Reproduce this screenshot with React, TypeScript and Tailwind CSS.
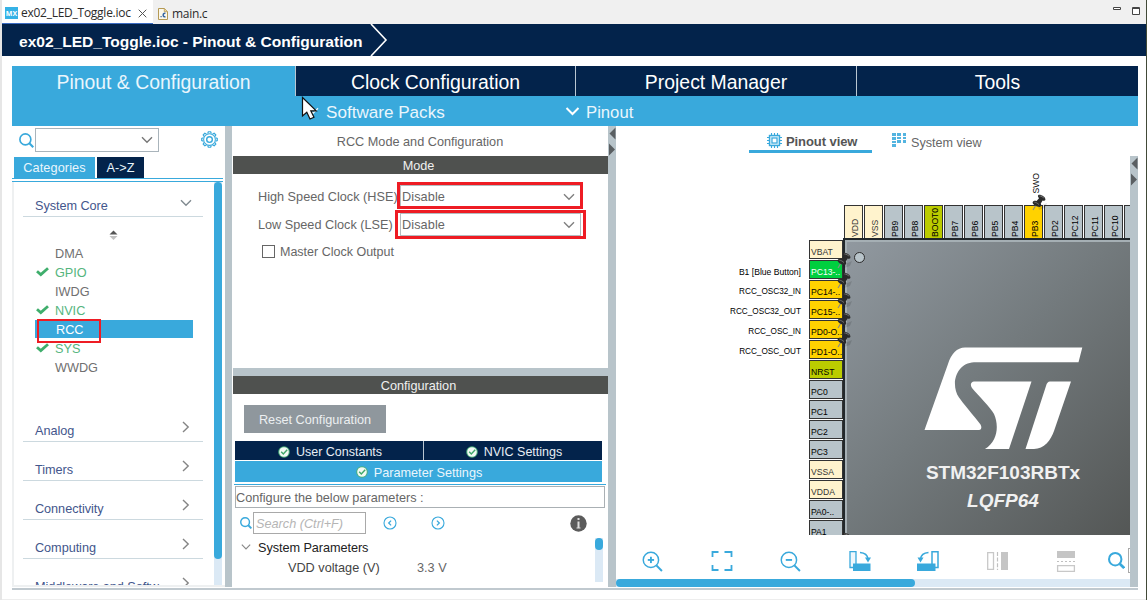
import React from "react";

const SANS = "font-['Liberation_Sans',Arial,sans-serif]";

function Chevron({ dir, className = "" }: { dir: "down" | "right"; className?: string }) {
  return dir === "down" ? (
    <svg width="12" height="8" viewBox="0 0 12 8" className={className} fill="none" stroke="currentColor" strokeWidth="1.4">
      <path d="M1 1.2 L6 6.2 L11 1.2" />
    </svg>
  ) : (
    <svg width="8" height="12" viewBox="0 0 8 12" className={className} fill="none" stroke="currentColor" strokeWidth="1.4">
      <path d="M1 1 L6.2 6 L1 11" />
    </svg>
  );
}

function Magnifier({ size = 16, sign, stroke = 2 }: { size?: number; sign?: "plus" | "minus"; stroke?: number }) {
  return (
    <svg width={size} height={size} viewBox="0 0 20 20" fill="none" stroke="#39a9dc" strokeWidth={stroke} className="shrink-0">
      <circle cx="8.5" cy="8.5" r="7.3" />
      <path d="M13.8 13.8 L19 19" strokeWidth={stroke * 1.3} />
      {sign && <path d="M5.5 8.5 H11.5" strokeWidth="1.8" />}
      {sign === "plus" && <path d="M8.5 5.5 V11.5" strokeWidth="1.8" />}
    </svg>
  );
}

function Gear() {
  const teeth = Array.from({ length: 8 }, (_, i) => i * 45);
  return (
    <svg width="17" height="17" viewBox="-9 -9 18 18" fill="none" stroke="#39a9dc">
      {teeth.map((a) => (
        <path key={a} d="M-1.9 -6.4 L-1.2 -8.2 H1.2 L1.9 -6.4" strokeWidth="1.3" transform={`rotate(${a})`} />
      ))}
      <circle r="6.2" strokeWidth="1.1" />
      <circle r="3" strokeWidth="1.5" />
    </svg>
  );
}

function Tick() {
  return (
    <svg width="13" height="10" viewBox="0 0 13 10" fill="none" stroke="#3fae6c" strokeWidth="2.8">
      <path d="M1 4.2 L4.8 7.6 L12 1.2" />
    </svg>
  );
}

function Badge() {
  return (
    <svg width="12" height="12" viewBox="0 0 12 12" className="shrink-0">
      <circle cx="6" cy="6" r="5.8" fill="#4bb17a" />
      <circle cx="6" cy="6" r="4.8" fill="#f2faf4" />
      <path d="M3.2 5.8 L5.3 8 L9.2 3.8" fill="none" stroke="#3fa869" strokeWidth="1.4" />
    </svg>
  );
}

function EditorTabs() {
  return (
    <div className="flex h-6 bg-[#f0f0f0] font-['Open_Sans','Noto_Sans',sans-serif] text-[12px] text-[#2b2b2b]">
      <div className="flex w-[151px] items-center border-b border-[#3b6cc4] bg-white pl-[3px] pt-[3px]">
        <div className="flex h-3 w-[13px] items-center justify-center bg-[#35b2e6] text-[7px] font-bold leading-none text-white">MX</div>
        <span className="ml-[3px] w-[111px] whitespace-nowrap tracking-[-0.26px]">ex02_LED_Toggle.ioc</span>
        <svg width="9" height="9" viewBox="0 0 9 9" stroke="#555" strokeWidth="1" className="ml-[6px]">
          <path d="M0.7 0.7 L8.3 8.3 M8.3 0.7 L0.7 8.3" />
        </svg>
      </div>
      <div className="flex items-center pl-[5px] pt-[3px]">
        <svg width="10" height="12" viewBox="0 0 10 12">
          <path d="M0.5 0.5 H6.5 L9.5 3.5 V11.5 H0.5 Z" fill="#fbf8ec" stroke="#b59a55" />
          <path d="M6.3 0.5 V3.7 H9.5" fill="#ecd9a0" stroke="#b59a55" strokeWidth=".8" />
          <path d="M7.5 5.4 C4.6 4.4 4.2 9.6 7.5 8.7" fill="none" stroke="#3465a4" strokeWidth="1.5" />
          <path d="M2.5 8 h1.2 v1.3 h-1.2z" fill="#3465a4" />
        </svg>
        <span className="ml-1 tracking-[-0.3px]">main.c</span>
      </div>
      <svg width="30" height="12" viewBox="0 0 30 12" className="ml-auto mr-[4px] mt-[5px]" fill="#fff" stroke="#444">
        <path d="M1.5 2.5 H8.5 V4.5 H1.5 Z" />
        <path d="M20.5 2.5 H27.5 V9.5 H20.5 Z M20.5 3.5 H27.5" />
      </svg>
    </div>
  );
}

function TitleBar() {
  return (
    <div className="flex h-8 items-center bg-[#03234b] pl-[17px]">
      <span className="w-[351px] whitespace-nowrap pt-[3px] text-[15.56px] font-bold text-white">
        ex02_LED_Toggle.ioc - Pinout &amp; Configuration
      </span>
      <svg width="18" height="32" viewBox="0 0 18 32" fill="none" stroke="#fff" strokeWidth="1.6">
        <path d="M1 0 L16 16 L1 32" />
      </svg>
    </div>
  );
}

function MainTabs() {
  const tab = "flex items-center justify-center pt-[4px]";
  return (
    <div className="text-[19.4px] leading-none text-white">
      <div className="grid h-[30px] grid-cols-[283px_279px_280px_281px] grid-rows-[30px] gap-x-px bg-[#b9c6d2]">
        <div className={`${tab} bg-[#39a9dc] text-[#eaf6fc]`}>Pinout &amp; Configuration</div>
        <div className={`${tab} bg-[#03234b]`}>Clock Configuration</div>
        <div className={`${tab} bg-[#03234b]`}>Project Manager</div>
        <div className={`${tab} bg-[#03234b]`}>Tools</div>
      </div>
      <div className="flex h-[30px] items-center bg-[#39a9dc] pl-[295px] pt-[4px] text-[16.7px] text-[#eaf6fc]">
        <Chevron dir="down" className="mb-1" />
        <span className="ml-[7px] w-[239px] text-[17.1px]">Software Packs</span>
        <svg width="15" height="9" viewBox="0 0 15 9" fill="none" stroke="#fff" strokeWidth="2" className="mb-1">
          <path d="M1.5 1 L7.5 7 L13.5 1" />
        </svg>
        <span className="ml-[6px]">Pinout</span>
      </div>
    </div>
  );
}

const peripherals = [
  { name: "DMA" },
  { name: "GPIO", on: true },
  { name: "IWDG" },
  { name: "NVIC", on: true },
  { name: "RCC", selected: true },
  { name: "SYS", on: true },
  { name: "WWDG" },
];

function Section({ name, open }: { name: string; open?: boolean }) {
  return (
    <div className="ml-[9px] flex h-[39px] w-[180px] shrink-0 items-end border-b border-[#ccd9df] pb-[2px] pl-3 text-[12.7px] leading-[15px] text-[#43568c]">
      <span className="w-[147px] whitespace-nowrap tracking-[-0.05px]">{name}</span>
      <Chevron dir={open ? "down" : "right"} className={open ? "mb-[7px] -ml-[2px] text-[#808a90]" : "mb-[6px] text-[#858585]"} />
    </div>
  );
}

function CategoryPanel() {
  return (
    <div className="flex w-[213px] flex-col text-[12.7px]">
      <div className="flex h-[31px] items-start pl-[7px] pt-[2px]">
        <div className="mt-[5px]"><Magnifier size={15} stroke={2.2} /></div>
        <div className="ml-px flex h-[24px] w-[124px] items-center justify-end border border-[#a9b4bb] pr-[5px] text-[#777]">
          <Chevron dir="down" />
        </div>
        <div className="ml-[42px] mt-[3px]"><Gear /></div>
      </div>
      <div className="flex h-[21px] gap-[2px] pl-[2px] text-[#eaf6fc]">
        <div className="flex w-[81px] items-center justify-center bg-[#39a9dc] pt-[3px] tracking-[0.1px]">Categories</div>
        <div className="flex w-[47px] items-center justify-center bg-[#03234b] pt-[3px]">A-&gt;Z</div>
      </div>
      <div className="h-[4px] w-[211px] border-y border-[#39a9dc]" />
      <div className="flex min-h-0 flex-1 border-b-2 border-l-2 border-[#eef0f1]">
        <div className="flex h-[403px] w-[200px] flex-col overflow-hidden">
          <div className="-mt-[4px]"><Section name="System Core" open /></div>
          <svg width="9" height="10" viewBox="0 0 9 10" className="ml-[95px] mt-[13px] shrink-0">
            <path d="M0.5 4.5 L4.5 0.5 L8.5 4.5 Z" fill="#555" />
            <path d="M0.5 6 L4.5 10 L8.5 6 Z" fill="#c0c0c0" />
          </svg>
          <div className="mt-[3px] flex shrink-0 flex-col">
            {peripherals.map((p) => (
              <div key={p.name} className="relative flex h-[19px] items-center pl-[21px]">
                <div className={`flex h-[18px] w-[158px] items-center ${p.selected ? "bg-[#39a9dc] text-white" : p.on ? "text-[#55b57e]" : "text-[#707070]"}`}>
                  <span className="w-5 shrink-0 pl-[1px]">{p.on && <Tick />}</span>
                  <span className={p.selected ? "ml-px pt-[5px]" : "pt-[4px]"}>{p.name}</span>
                </div>
                {p.selected && <div className="absolute left-[23px] top-0 h-[24px] w-[64px] border-2 border-[#ee1c24]" />}
              </div>
            ))}
          </div>
          <div className="mt-[27px] flex flex-col">
            {["Analog", "Timers", "Connectivity", "Computing", "Middleware and Softw"].map((n) => (
              <Section key={n} name={n} />
            ))}
          </div>
        </div>
        <div className="w-2 bg-[#dbe9f5]">
          <div className="h-[377px] rounded-full bg-[#39a9dc]" />
        </div>
      </div>
    </div>
  );
}

function ModeRow({ label, className, frame }: { label: string; className: string; frame: string }) {
  return (
    <div className={`relative flex items-center pl-[25px] ${className}`}>
      <span className="w-[142px] whitespace-nowrap pt-[2px]">{label}</span>
      <div className="flex h-[23px] w-[181px] items-center justify-between border border-[#b4bcc0] bg-white pl-[1px] pr-[5px]">
        <span className="pt-[2px] tracking-[0.1px]">Disable</span>
        <Chevron dir="down" className="text-[#808080]" />
      </div>
      <div className={`absolute border-3 border-[#ee1c24] ${frame}`} />
    </div>
  );
}

function CircleArrow({ flip }: { flip?: boolean }) {
  return (
    <svg width="14" height="14" viewBox="0 0 14 14" fill="none" stroke="#39a9dc" className={flip ? "scale-x-[-1]" : ""}>
      <circle cx="7" cy="7" r="6" strokeWidth="1.1" />
      <path d="M8.1 4.6 L5.7 7 L8.1 9.4" strokeWidth="1.3" />
    </svg>
  );
}

function ModePanel() {
  return (
    <div className="flex w-[375px] flex-col text-[12.7px] text-[#666]">
      <div className="flex h-[30px] items-center justify-center pr-px pt-[3px]">RCC Mode and Configuration</div>
      <div className="flex h-[18px] items-center justify-center bg-[#4f514f] pr-[4px] pt-[3px] text-[#f0f0f0]">Mode</div>
      <div className="flex h-[194px] flex-col pt-[10px]">
        <ModeRow label="High Speed Clock (HSE)" className="h-[25px]" frame="left-[164px] top-[-2px] h-[27px] w-[186px]" />
        <ModeRow label="Low Speed Clock (LSE)" className="mt-[3px] h-[25px]" frame="left-[162px] top-[-2px] h-[29px] w-[191px]" />
        <div className="mt-[5px] flex items-center pl-[29px]">
          <div className="h-[13px] w-[13px] border border-[#666]" />
          <span className="ml-[5px] pt-px text-[12.5px]">Master Clock Output</span>
        </div>
      </div>
      <div className="h-[8px] bg-[#b8c4ca]" />
      <div className="flex h-[18px] items-center justify-center bg-[#4f514f] pr-[4px] pt-[3px] text-[#f0f0f0]">Configuration</div>
      <div className="ml-[11px] mt-[11px] flex h-[28px] w-[142px] items-center justify-center bg-[#8f979d] pt-[3px] text-[#eceff1]">
        Reset Configuration
      </div>
      <div className="ml-[2px] mt-[8px] grid h-[19px] w-[367px] grid-cols-[188px_178px] grid-rows-[19px] gap-x-px bg-[#b9c6d2] text-[#e8eef5]">
        <div className="flex items-center justify-center gap-[6px] bg-[#03234b] pl-[2px] pt-[2px] text-[12.5px] leading-none"><Badge /><span className="pt-[2px]">User Constants</span></div>
        <div className="flex items-center justify-center gap-[6px] bg-[#03234b] pl-[2px] pt-[2px] text-[12.5px] leading-none"><Badge /><span className="pt-[2px]">NVIC Settings</span></div>
      </div>
      <div className="ml-[2px] mt-px flex h-[21px] w-[367px] items-center justify-center gap-[6px] bg-[#39a9dc] pl-px pt-px leading-none text-[#eaf6fc]"><Badge /><span className="pt-[3px]">Parameter Settings</span></div>
      <div className="ml-px h-[3px] w-[372px] border-b border-[#39a9dc]" />
      <div className="ml-[2px] mt-px flex h-[22px] w-[370px] items-center border border-[#aab0b4] pl-px pt-[3px] text-[12.7px]">
        <span className="-ml-px">Configure the below parameters :</span>
      </div>
      <div className="flex h-[30px] items-center pl-[7px]">
        <Magnifier size={12} stroke={2.4} />
        <div className="ml-[1px] flex h-[22px] w-[113px] items-center border border-[#a9a9a9] pl-[2px] pt-[3px] italic text-[#b5b5b5]">Search (Ctrl+F)</div>
        <div className="ml-[17px]"><CircleArrow /></div>
        <div className="ml-[34px]"><CircleArrow flip /></div>
        <svg width="17" height="17" viewBox="0 0 17 17" className="ml-[125px]">
          <circle cx="8.5" cy="8.5" r="8.2" fill="#5b5b5b" />
          <path d="M7.5 3 h2 v2 h-2 z M7.5 6.5 h2 v6 h1 v1 h-4 v-1 h1 z" fill="#ddd" />
        </svg>
      </div>
      <div className="flex h-[47px] justify-between pr-[5px]">
        <div className="flex flex-col pt-px text-[#222]">
          <div className="flex h-5 items-center pl-[8px]">
            <Chevron dir="down" className="mb-1 w-[10px] text-[#888]" />
            <span className="ml-[7px] tracking-[-0.06px]">System Parameters</span>
          </div>
          <div className="flex h-5 items-center pl-[55px] text-[#444]">
            <span className="w-[129px]">VDD voltage (V)</span>
            <span className="text-[#666]">3.3 V</span>
          </div>
        </div>
        <div className="h-[44px] w-2 bg-[#dbe9f5]"><div className="h-[12px] rounded-full bg-[#39a9dc]" /></div>
      </div>
    </div>
  );
}

const PIN_TONES = {
  power: "bg-[#fff3cd] text-[#333]",
  idle: "bg-[#b8c4ca] text-black",
  boot: "bg-[#bbcc00] text-black",
  used: "bg-[#ffd200] text-black",
  active: "bg-[#00cf3f] text-white",
};
type Tone = keyof typeof PIN_TONES;

const topPins: [string, Tone][] = [
  ["VDD", "power"], ["VSS", "power"], ["PB9", "idle"], ["PB8", "idle"], ["BOOT0", "boot"],
  ["PB7", "idle"], ["PB6", "idle"], ["PB5", "idle"], ["PB4", "idle"], ["PB3", "used"],
  ["PD2", "idle"], ["PC12", "idle"], ["PC11", "idle"], ["PC10", "idle"], ["", "idle"],
];

const leftPins: [string, Tone, string?][] = [
  ["VBAT", "power"],
  ["PC13-..", "active", "B1 [Blue Button]"],
  ["PC14-..", "used", "RCC_OSC32_IN"],
  ["PC15-..", "used", "RCC_OSC32_OUT"],
  ["PD0-O..", "used", "RCC_OSC_IN"],
  ["PD1-O..", "used", "RCC_OSC_OUT"],
  ["NRST", "boot"],
  ["PC0", "idle"], ["PC1", "idle"], ["PC2", "idle"], ["PC3", "idle"],
  ["VSSA", "power"], ["VDDA", "power"], ["PA0-..", "idle"], ["PA1", "idle"],
];

function Pushpin({ className }: { className: string }) {
  return (
    <svg width="18" height="18" viewBox="0 0 18 18" className={`absolute ${className}`}>
      <path d="M7 13 L16 9 L14 14 L8 16 Z" fill="#000" opacity=".12" />
      <path d="M5 11 L2 16" stroke="#888" strokeWidth="1.1" />
      <path d="M7.2 1.2 C8.6 -0.4 14.6 2.6 14.4 5.4 C14.2 6.8 12.6 7 11.6 6.6 L9.8 9.4 C10.8 11.4 10 13.2 8.4 13 C5.6 12.8 1.4 10.6 1.6 8.4 C1.8 7 3.6 6.4 5.6 7 L8 4.2 C7 3.2 6.6 2 7.2 1.2 Z" fill="#2a2a2a" />
      <path d="M8.4 2 C10.2 2 12 3 13.2 4.4 M3.4 8.2 C5 8.4 6.6 9.2 8 10.6" stroke="#777" strokeWidth=".9" fill="none" />
    </svg>
  );
}

function ChipCanvas() {
  return (
    <div className="relative h-[379px] w-[514px] overflow-hidden text-[8.6px] leading-none">
      <div className="absolute left-[228px] top-[49px] flex gap-px">
        {topPins.map(([name, tone], i) => (
          <div key={i} className={`flex h-[34px] w-[19px] shrink-0 items-center border border-[#333] pb-[1px] pl-[6px] ${PIN_TONES[tone]}`}>
            <span className="h-full rotate-180 whitespace-nowrap pt-0 text-left [writing-mode:vertical-rl]">{name}</span>
          </div>
        ))}
      </div>
      <div className="absolute left-0 top-[84px] flex flex-col gap-px">
        {leftPins.map(([name, tone, label]) => (
          <div key={name} className="flex h-[19px] items-center">
            <span className={`w-[185px] whitespace-nowrap pt-[5px] text-right text-black ${label?.startsWith("B1") ? "text-[8.6px]" : "text-[8.2px]"}`}>{label}</span>
            <div className={`ml-[8px] flex h-[19px] w-[34px] items-center overflow-hidden whitespace-nowrap border border-[#333] pl-px pt-[5px] ${PIN_TONES[tone]}`}>{name}</div>
          </div>
        ))}
      </div>
      <div className="absolute left-[227px] top-[82px] h-[310px] w-[480px] border-2 border-[#22282b] bg-[linear-gradient(135deg,#9199a0_0%,#737a7d_35%,#545756_74%,#4c4f4e_100%)] shadow-[inset_2px_2px_0_#a5afb4]" />
      <div className="absolute left-[238px] top-[96px] h-[11px] w-[11px] rounded-full border border-[#2b2b2b] bg-[#b8c4ca]" />
      <svg width="210" height="120" viewBox="900 330 210 120" className="absolute left-[284px] top-[174px]">
        <g fill="#fff">
          <path d="M965 347.5 H1082.3 L1078.5 362.3 H974 C956.5 363 950 384 959 397.5 C962 402 974 416 980.5 424.5 C982 427 981.5 430 979 430 H924.5 L948 364 C951 354 957 347.5 965 347.5 Z" />
          <path d="M974 381.5 H1031.5 L1009 449 H985 C998 441 999 425 994 414 C991 408 978 395 972 388 C969.5 384.5 971.5 381.5 974 381.5 Z" />
          <path d="M1050 381.5 H1071 L1054 431 C1051 440 1044 449 1034 449 H1025.5 L1046 386 C1046.8 383 1048 381.5 1050 381.5 Z" />
        </g>
      </svg>
      <div className="absolute left-[287px] top-[307px] w-[200px] text-center text-[19px] font-bold leading-[20px] text-[#f1f1f1]">STM32F103RBTx</div>
      <div className="absolute left-[287px] top-[335px] w-[200px] text-center text-[19px] font-bold italic leading-[20px] text-[#f1f1f1]">LQFP64</div>
      <Pushpin className="left-[220px] top-[96px]" />
      <Pushpin className="left-[220px] top-[116px]" />
      <Pushpin className="left-[220px] top-[136px]" />
      <Pushpin className="left-[220px] top-[156px]" />
      <Pushpin className="left-[220px] top-[175px]" />
      <Pushpin className="left-[415px] top-[38px]" />
      <Pushpin className="left-[220px] top-[376px]" />
      <span className="absolute left-[416px] top-[17px] rotate-180 text-[8.6px] text-black [writing-mode:vertical-rl]">SWO</span>
    </div>
  );
}

function ViewTabs() {
  return (
    <div className="flex h-[30px] pl-[133px] text-[#666]">
      <div className="flex h-[27px] w-[123px] items-center border-b-3 border-[#39a9dc] pl-[18px] pt-[4px] text-[13px] font-bold text-[#555]">
        <svg width="15" height="15" viewBox="0 0 15 15" fill="none" stroke="#39a9dc" className="mr-[4px]">
          <path d="M4.5 0 V15 M7.5 0 V15 M10.5 0 V15 M0 4.5 H15 M0 7.5 H15 M0 10.5 H15" strokeWidth="1.1" />
          <rect x="2.5" y="2.5" width="10" height="10" fill="#d9effa" strokeWidth="1.4" />
          <rect x="5" y="5" width="5" height="5" fill="#fff" strokeWidth="1.2" />
        </svg>
        <span className="pt-[4px] tracking-[-0.08px]">Pinout view</span>
      </div>
      <div className="flex h-[27px] items-center pl-[20px] pt-[3px] text-[12.6px]">
        <svg width="15" height="14" viewBox="0 0 15 14" className="-mt-[3px] mr-[4px]" fill="#53b4e0">
          <path d="M0 0h4v3H0z M5 0h4v3H5z M11 0h3v3h-3z M0 4h4v3H0z M5 4h4v2H5z M11 4h3v2h-3z M0 8h4v2H0z M5 7h4v3H5z M11 7h3v3h-3z M0 11h4v3H0z" />
        </svg>
        <span className="pt-[5px]">System view</span>
      </div>
    </div>
  );
}

function CanvasToolbar() {
  return (
    <div className="flex h-[44px] w-[514px] items-start overflow-hidden pl-[26px] pt-[16px]">
      <div className="w-[69px] shrink-0"><Magnifier size={21} sign="plus" stroke={1.4} /></div>
      <svg width="22" height="20" viewBox="0 0 22 20" fill="none" stroke="#39a9dc" strokeWidth="1.8" className="mr-[47px] shrink-0">
        <path d="M1.5 6 V1 H7.5 M13.5 1 H20.5 V6 M20.5 14 V19 H13.5 M7.5 19 H1.5 V14" />
      </svg>
      <div className="w-[69px] shrink-0"><Magnifier size={21} sign="minus" stroke={1.4} /></div>
      <svg width="22" height="20" viewBox="0 0 22 20" className="mr-[46px] shrink-0">
        <path d="M1 .7 H7 V16.5 H1 Z" fill="#eef7fc" stroke="#39a9dc" strokeWidth="1.3" />
        <path d="M4 12.5 H21.5 V20 H4 Z" fill="#39a9dc" />
        <path d="M11 1.6 C15.5 2 18.5 4 19 8" fill="none" stroke="#39a9dc" strokeWidth="1.5" />
        <path d="M16 6.5 H22 L19 11.5 Z" fill="#39a9dc" />
      </svg>
      <svg width="22" height="20" viewBox="0 0 22 20" className="mr-[48px] shrink-0 scale-x-[-1]">
        <path d="M1 .7 H7 V16.5 H1 Z" fill="#fff" stroke="#39a9dc" strokeWidth="1.5" />
        <path d="M3.5 12.5 H22 V20 H3.5 Z" fill="#39a9dc" />
        <path d="M10.5 1.6 C15 2 18 4 18.5 8" fill="none" stroke="#39a9dc" strokeWidth="1.5" />
        <path d="M15.5 6.5 H21.5 L18.5 11.5 Z" fill="#39a9dc" />
      </svg>
      <svg width="22" height="20" viewBox="0 0 22 20" className="mr-[47px] shrink-0">
        <path d="M.7 1.7 H6.5 V18.3 H.7 Z" fill="none" stroke="#c8c8c8" strokeWidth="1.3" />
        <path d="M10.5 1 V19" stroke="#c0c0c0" strokeWidth="1.2" strokeDasharray="4 1.6" />
        <path d="M14 1 H21 V19 H14 Z" fill="#c5c5c5" />
      </svg>
      <svg width="20" height="22" viewBox="0 0 20 22" className="mr-[32px] shrink-0">
        <path d="M1 0 H19 V7 H1 Z" fill="#c5c5c5" />
        <path d="M1 10.5 H19" stroke="#c0c0c0" strokeDasharray="2 2" />
        <path d="M1.6 14.6 H18.4 V20.4 H1.6 Z" fill="none" stroke="#c8c8c8" strokeWidth="1.3" />
      </svg>
      <div className="mt-px shrink-0"><Magnifier size={17} stroke={2.4} /></div>
      <div className="ml-[3px] -mt-[3px] h-[25px] w-10 shrink-0 border border-[#a9a9a9]" />
    </div>
  );
}

function Splitter() {
  return (
    <div className="w-2 shrink-0 bg-[#b8c4ca]">
      <svg width="8" height="32" viewBox="0 0 8 32" fill="#5a5f62">
        <path d="M7.5 1.5 V13.5 L1.5 7.5 Z M1 17.5 L7 23.5 L1 29.5 Z" />
      </svg>
    </div>
  );
}

function PinoutPanel() {
  return (
    <div className="flex w-[522px] flex-col">
      <ViewTabs />
      <div className="flex h-[431px]">
        <div className="flex w-[514px] flex-col">
          <ChipCanvas />
          <CanvasToolbar />
          <div className="h-[8px] bg-[#dbe9f5]"><div className="h-[8px] w-[299px] rounded-full bg-[#39a9dc]" /></div>
        </div>
        <Splitter />
      </div>
    </div>
  );
}

export default function App() {
  return (
    <div className={`relative h-[600px] w-[1147px] overflow-hidden border-l-2 border-l-[#e6e6e6] bg-white ${SANS}`}>
      <div className="flex h-full w-[1145px] flex-col border-r border-r-[#424a38]">
        <EditorTabs />
        <TitleBar />
        <div className="ml-[10px] mt-[10px] w-[1126px]">
          <MainTabs />
          <div className="flex h-[461px]">
            <CategoryPanel />
            <div className="mr-px w-[7px] bg-[#b8c4ca]" />
            <ModePanel />
            <Splitter />
            <PinoutPanel />
          </div>
          <div className="h-[3px] border-b-2 border-[#c0c9cf]" />
        </div>
        <div className="mt-auto h-px bg-[#ededed]" />
      </div>
      <svg width="20" height="26" viewBox="0 0 20 26" className="absolute left-[299px] top-[96px]">
        <path d="M1.5 1.5 V20 L5.8 16.2 L9 23 L13 21.2 L9.8 14.8 H15.2 Z" fill="#fff" stroke="#111" strokeWidth="1.2" />
      </svg>
    </div>
  );
}
